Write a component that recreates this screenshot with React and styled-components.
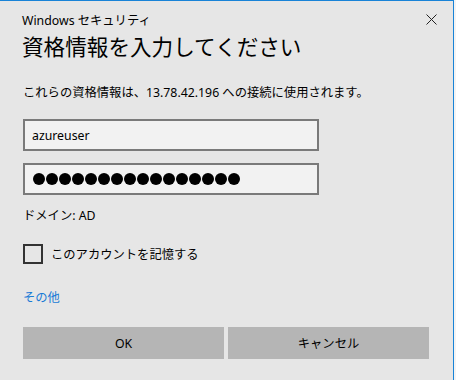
import React from 'react';
import styled, { createGlobalStyle } from 'styled-components';

const GlobalStyle = createGlobalStyle`
  html, body {
    margin: 0;
    padding: 0;
    background: #f3f3f3;
  }
  body {
    font-family: "Noto Sans", "Noto Sans CJK JP", sans-serif;
    color: #000;
  }
`;

const Dialog = styled.div`
  width: 430px;
  height: 379px;
  padding-left: 23px;
  background: #e6e6e6;
  border-top: 1px solid #1883d7;
  border-right: 1px solid #1883d7;
  display: flex;
  flex-direction: column;
  overflow: hidden;
`;

const TitleBar = styled.div`
  display: flex;
  align-items: center;
  justify-content: space-between;
  height: 26px;
  margin-top: 6px;
  margin-left: -1px;
  padding-right: 16px;
  font-size: 12.3px;
`;

const CloseButton = styled.div`
  width: 11px;
  height: 11px;
  display: flex;
  margin-top: -2px;
`;

const Heading = styled.h1`
  margin: 0;
  margin-left: -1px;
  font-weight: 400;
  font-size: 21.6px;
  line-height: 28px;
`;

const Message = styled.p`
  margin: 22px 0 0;
  font-size: 12.3px;
  line-height: 20px;
`;

const Field = styled.div`
  width: 296px;
  height: 32px;
  box-sizing: border-box;
  margin-top: ${props => props.gap}px;
  border: 2px solid #7a7a7a;
  background: #f2f2f2;
  display: flex;
  align-items: center;
  padding-left: 7px;
  font-size: 12.3px;
`;

const Dots = styled.div`
  display: flex;
  gap: 1px;
  padding-left: 1px;
`;

const Dot = styled.span`
  width: 12px;
  height: 12px;
  border-radius: 50%;
  background: #000;
`;

const Domain = styled.div`
  margin-top: 11px;
  font-size: 12.3px;
  line-height: 20px;
`;

const CheckRow = styled.label`
  display: flex;
  align-items: center;
  gap: 8px;
  margin-top: 18px;
  height: 20px;
  font-size: 12.3px;
`;

const Box = styled.span`
  width: 20px;
  height: 20px;
  box-sizing: border-box;
  border: 2px solid #333;
`;

const MoreLink = styled.div`
  margin-top: 24px;
  font-size: 12.3px;
  line-height: 20px;
  color: #1a7bd6;
`;

const Buttons = styled.div`
  display: flex;
  gap: 4px;
  margin-top: 19px;
`;

const Button = styled.div`
  width: 201px;
  height: 32px;
  background: #b5b5b5;
  display: flex;
  align-items: center;
  justify-content: center;
  font-size: 12.3px;
`;

const App = () => (
  <>
    <GlobalStyle />
    <Dialog>
      <TitleBar>
        <span>Windows セキュリティ</span>
        <CloseButton>
          <svg width="11" height="11" viewBox="0 0 11 11">
            <path d="M0.5 0.5 L10.5 10.5 M10.5 0.5 L0.5 10.5" stroke="#222" strokeWidth="1" fill="none" />
          </svg>
        </CloseButton>
      </TitleBar>
      <Heading>資格情報を入力してください</Heading>
      <Message>これらの資格情報は、13.78.42.196 への接続に使用されます。</Message>
      <Field gap={16}>azureuser</Field>
      <Field gap={12}>
        <Dots>
          {Array.from({ length: 16 }).map((_, i) => <Dot key={i} />)}
        </Dots>
      </Field>
      <Domain>ドメイン: AD</Domain>
      <CheckRow>
        <Box />
        このアカウントを記憶する
      </CheckRow>
      <MoreLink>その他</MoreLink>
      <Buttons>
        <Button>OK</Button>
        <Button>キャンセル</Button>
      </Buttons>
    </Dialog>
  </>
);

export default App;
